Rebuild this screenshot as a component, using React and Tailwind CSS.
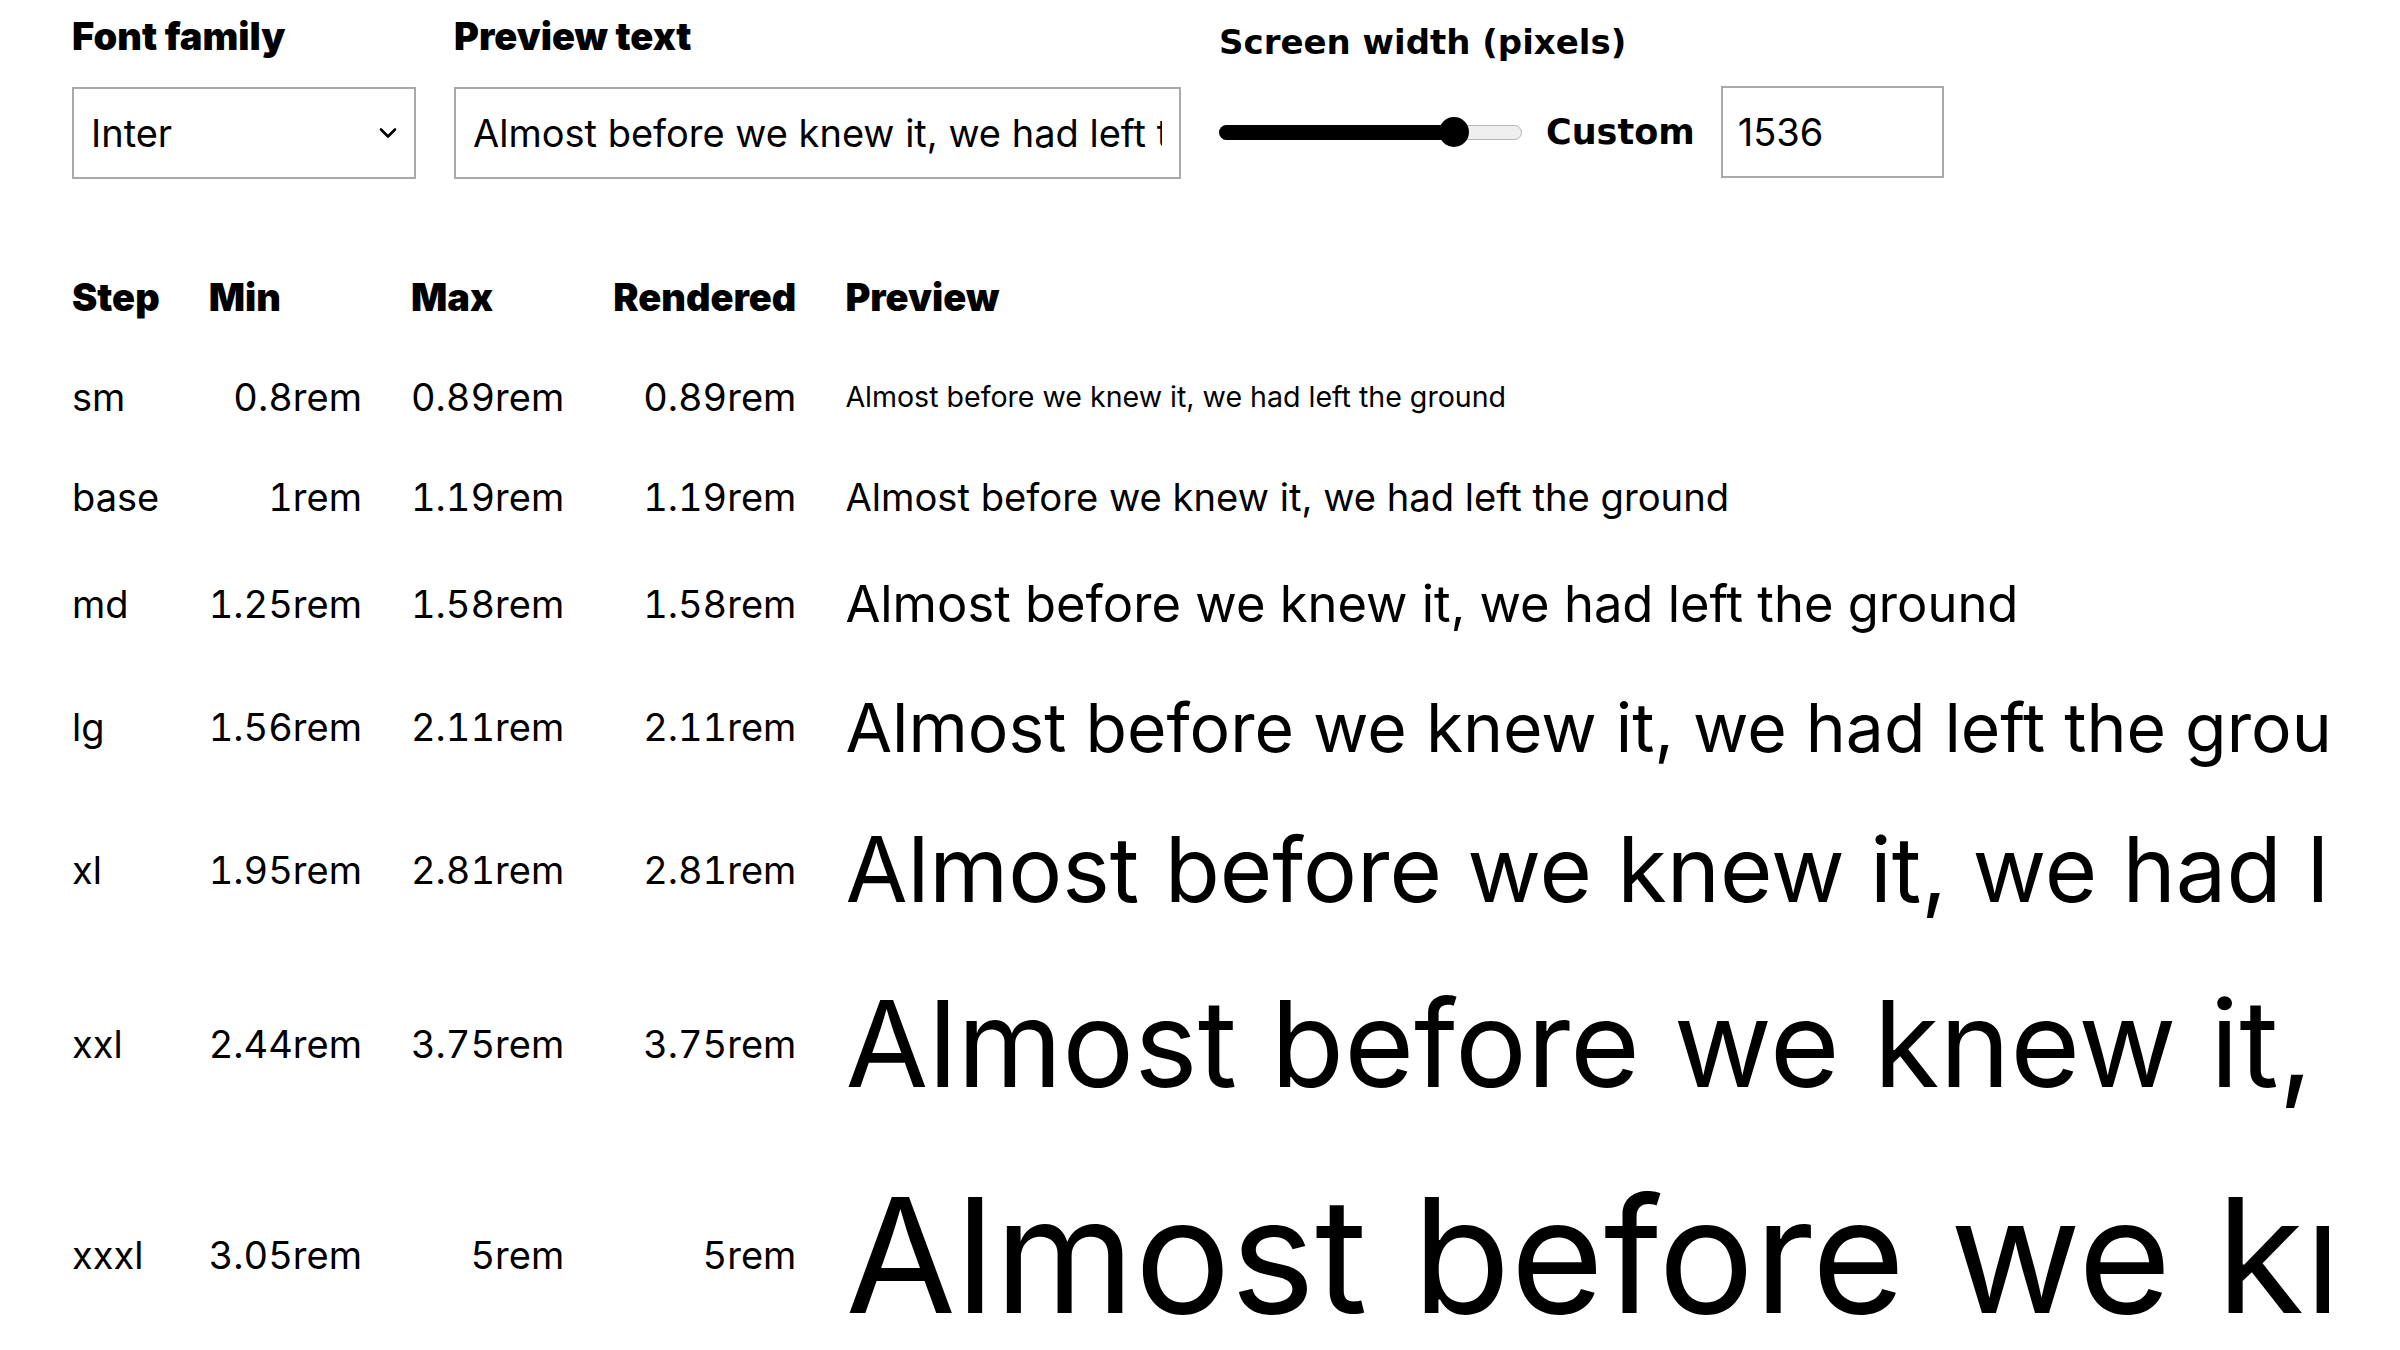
import React from "react";

const rows = [
  { step: "sm", min: "0.8rem", max: "0.89rem", rendered: "0.89rem", size: "text-[28.56px] leading-[1.08]" },
  { step: "base", min: "1rem", max: "1.19rem", rendered: "1.19rem", size: "text-[38.2px] leading-[40px]" },
  { step: "md", min: "1.25rem", max: "1.58rem", rendered: "1.58rem", size: "text-[50.7px] leading-[1.08]" },
  { step: "lg", min: "1.56rem", max: "2.11rem", rendered: "2.11rem", size: "text-[67.75px] leading-[70px]" },
  { step: "xl", min: "1.95rem", max: "2.81rem", rendered: "2.81rem", size: "text-[90.1px] leading-[96px]" },
  { step: "xxl", min: "2.44rem", max: "3.75rem", rendered: "3.75rem", size: "text-[120px] leading-[132px]" },
  { step: "xxxl", min: "3.05rem", max: "5rem", rendered: "5rem", size: "text-[160px] leading-[171px]" },
];

const PREVIEW = "Almost before we knew it, we had left the ground";

function Label({ children }) {
  return (
    <div className="font-['Inter',sans-serif] font-black text-[38px] leading-[46px] mb-[28px] whitespace-nowrap">
      {children}
    </div>
  );
}

const th = "py-[30px] pr-[49px] leading-[40px] font-black text-left align-middle whitespace-nowrap";
const tdNum = "py-[30px] pr-[49px] leading-[40px] text-right align-middle whitespace-nowrap tabular-nums";

export default function App() {
  return (
    <div className="min-h-screen bg-white text-black font-['Inter',sans-serif] text-[38px] px-[72px] pt-[13px]">
      <div className="flex items-start gap-[38px]">
        <div className="flex flex-col">
          <Label>Font family</Label>
          <div className="relative w-[344px] h-[92px] border-2 border-[#a9a9a9] bg-white flex items-center pl-[17px]">
            <span className="leading-none">Inter</span>
            <svg
              className="absolute right-[17px] top-[38px]"
              width="18"
              height="12"
              viewBox="0 0 18 12"
              fill="none"
              stroke="black"
              strokeWidth="2.6"
              strokeLinecap="round"
              strokeLinejoin="round"
            >
              <polyline points="2,2.5 9,9.5 16,2.5" />
            </svg>
          </div>
        </div>

        <div className="flex flex-col">
          <Label>Preview text</Label>
          <input
            readOnly
            value={PREVIEW}
            className="w-[727px] h-[92px] border-2 border-[#a9a9a9] bg-white px-[17px] text-[38px] font-['Inter',sans-serif] text-black outline-none"
          />
        </div>

        <div className="flex flex-col">
          <div className="font-['DejaVu_Sans',sans-serif] font-bold text-[34px] leading-[40px] pt-[9px] mb-[24px] whitespace-nowrap">
            Screen width (pixels)
          </div>
          <div className="flex items-center h-[92px]">
            <div className="relative w-[303px] h-[15px] rounded-full bg-[#efefef] border border-[#b5b5b5]">
              <div className="absolute left-[-1px] top-[-1px] h-[15px] w-[242px] rounded-full bg-black" />
              <div className="absolute left-[219px] top-[-8.5px] w-[30px] h-[30px] rounded-full bg-black" />
            </div>
            <span className="ml-[24px] font-['DejaVu_Sans',sans-serif] font-bold text-[35px] leading-none">
              Custom
            </span>
            <input
              readOnly
              value="1536"
              className="ml-[26px] w-[223px] h-[92px] border-2 border-[#a9a9a9] bg-white px-[15px] text-[38px] font-['Inter',sans-serif] text-black outline-none"
            />
          </div>
        </div>
      </div>

      <table className="mt-[68px] border-collapse">
        <thead>
          <tr>
            <th className={th}>Step</th>
            <th className={th}>Min</th>
            <th className={th}>Max</th>
            <th className={th}>Rendered</th>
            <th className="py-[30px] leading-[40px] font-black text-left align-middle">Preview</th>
          </tr>
        </thead>
        <tbody>
          {rows.map((r) => (
            <tr key={r.step}>
              <td className="py-[30px] pr-[49px] leading-[40px] text-left align-middle">{r.step}</td>
              <td className={tdNum}>{r.min}</td>
              <td className={tdNum}>{r.max}</td>
              <td className={tdNum}>{r.rendered}</td>
              <td className="py-[30px] align-middle">
                <div className={`w-[1484px] overflow-x-clip whitespace-nowrap ${r.size}`}>
                  {PREVIEW}
                </div>
              </td>
            </tr>
          ))}
        </tbody>
      </table>
    </div>
  );
}
